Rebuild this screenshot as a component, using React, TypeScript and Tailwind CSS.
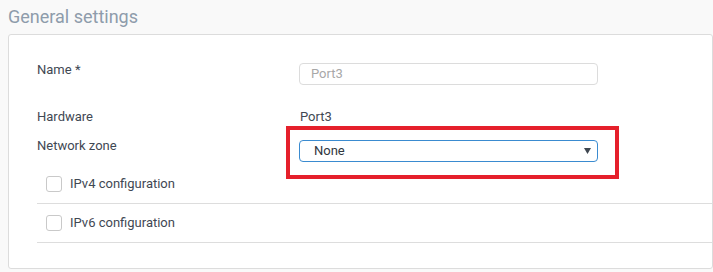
import React from 'react';

const CheckRow: React.FC<{ label: string }> = ({ label }) => (
  <div className="flex items-center h-[39px] border-b border-[#dddddd] pl-[9px]">
    <span className="w-4 h-4 rounded-[3px] border border-[#c9c9c9] bg-white shrink-0" />
    <span className="ml-2 text-[13px] leading-[16px] text-[#3f4853]">{label}</span>
  </div>
);

const App: React.FC = () => {
  return (
    <div className="min-h-screen bg-[#f9f9f9] font-['Roboto',sans-serif]">
      {/* Section title */}
      <div className="pl-2 pt-[5px] h-[34px] text-[18px] leading-[24px] text-[#8e9cab]">
        General settings
      </div>

      {/* Card */}
      <div className="ml-2 bg-white border border-[#dcdcdc] rounded-[3px] pl-[28px] pt-[28px] pb-[25px]">
        {/* Name */}
        <div className="flex items-start h-[22px]">
          <div className="w-[262px] text-[13px] leading-[14px] text-[#3f4853]">
            Name <span className="text-[#3f4853]">*</span>
          </div>
          <div className="w-[299px] h-[22px] border border-[#dcdcdc] rounded-[4px] px-[11px] flex items-center text-[13px] text-[#a8a8a8]">
            Port3
          </div>
        </div>

        {/* Hardware */}
        <div className="flex items-start mt-[25px] text-[13px] leading-[14px] text-[#3f4853]">
          <div className="w-[263px]">Hardware</div>
          <div>Port3</div>
        </div>

        {/* Network zone */}
        <div className="flex items-start mt-[15px]">
          <div className="w-[262px] text-[13px] leading-[14px] text-[#3f4853]">Network zone</div>
          <div className="relative mt-px">
            <div className="w-[299px] h-[22px] border border-[#3a8bd0] rounded-[4px] pl-[14px] pr-[5px] flex items-center justify-between text-[13px] text-[#2f3740]">
              <span>None</span>
              <svg width="7" height="6" viewBox="0 0 7 6" className="mr-px">
                <path d="M0 0h7L3.5 6z" fill="#3f4750" />
              </svg>
            </div>
            {/* highlight annotation */}
            <div className="absolute -left-[13px] -top-[14px] -right-[21px] -bottom-[17px] border-4 border-[#e5202b] pointer-events-none" />
          </div>
        </div>

        {/* Checkbox sections */}
        <div className="mt-[3px]">
          <CheckRow label="IPv4 configuration" />
          <CheckRow label="IPv6 configuration" />
        </div>
      </div>
    </div>
  );
};

export default App;
